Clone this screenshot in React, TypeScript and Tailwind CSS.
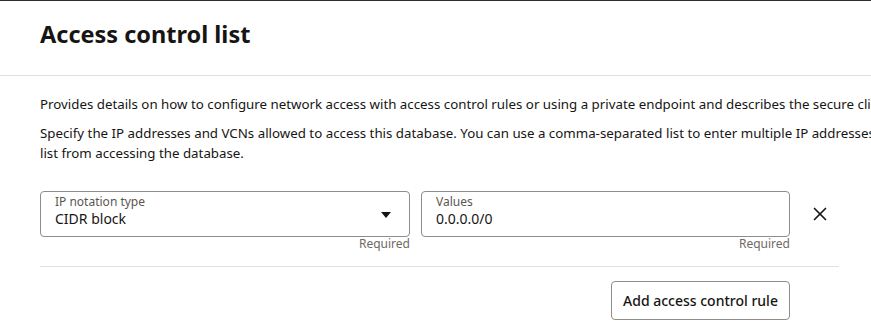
import { X } from 'lucide-react';

// --- Field ---

interface FieldProps {
  label: string;
  value: string;
  select?: boolean;
}

function Field({ label, value, select = false }: FieldProps) {
  return (
    <div className="flex flex-col">
      <div className="flex h-[46px] items-start rounded-[4px] border border-[#8f8c89] pl-[14px] pr-[18px] pt-[2px]">
        <div className="flex flex-1 flex-col">
          <span className="text-[12px] leading-[15px] text-[#5b5652]">{label}</span>
          <span className="text-[14px] leading-[19px] text-[#161513]">{value}</span>
        </div>
        {select && (
          <svg className="h-[6px] w-[10px] self-center text-[#161513]" viewBox="0 0 10 6" fill="currentColor">
            <path d="M0 0h10L5 6z" />
          </svg>
        )}
      </div>
      <span className="self-end text-[12px] leading-[14px] text-[#6f6964]">Required</span>
    </div>
  );
}

export default function App() {
  return (
    <div className="h-[323px] w-[871px] overflow-hidden border-t border-[#312d2a] bg-white font-['Noto_Sans',sans-serif] text-[#161513]">
      <div className="h-[75px] border-b border-[#e4e1dd] px-10 pt-[18px]">
        <h1 className="text-[23.5px] font-bold leading-[30px]">Access control list</h1>
      </div>

      <div className="px-10 pt-[18px]">
        <p className="whitespace-nowrap text-[13.3px] leading-[20px]">
          Provides details on how to configure network access with access control rules or using a private endpoint and describes the secure client connection options.
        </p>
        <p className="mt-[9px] whitespace-nowrap text-[13.3px] leading-[20px]">
          Specify the IP addresses and VCNs allowed to access this database. You can use a comma-separated list to enter multiple IP addresses. Access control lists block all IP addresses that are not in the
          <br />
          list from accessing the database.
        </p>

        <div className="mt-[28px] w-[799px]">
          <div className="flex">
            <div className="grid w-[750px] grid-cols-[370px_369px] gap-[11px]">
              <Field label="IP notation type" value="CIDR block" select />
              <Field label="Values" value="0.0.0.0/0" />
            </div>
            <div className="flex h-[46px] flex-1 items-center justify-center pl-[11px]">
              <X className="h-[22px] w-[22px] text-[#161513]" strokeWidth={1.8} />
            </div>
          </div>

          <div className="mt-[15px] border-t border-[#e4e1dd]" />

          <div className="flex w-[750px] justify-end pt-[14px]">
            <button
              type="button"
              className="h-[39px] w-[179px] rounded-[4px] border border-[#8f8c89] text-[14px] font-medium text-[#161513]"
            >
              Add access control rule
            </button>
          </div>
        </div>
      </div>
    </div>
  );
}
